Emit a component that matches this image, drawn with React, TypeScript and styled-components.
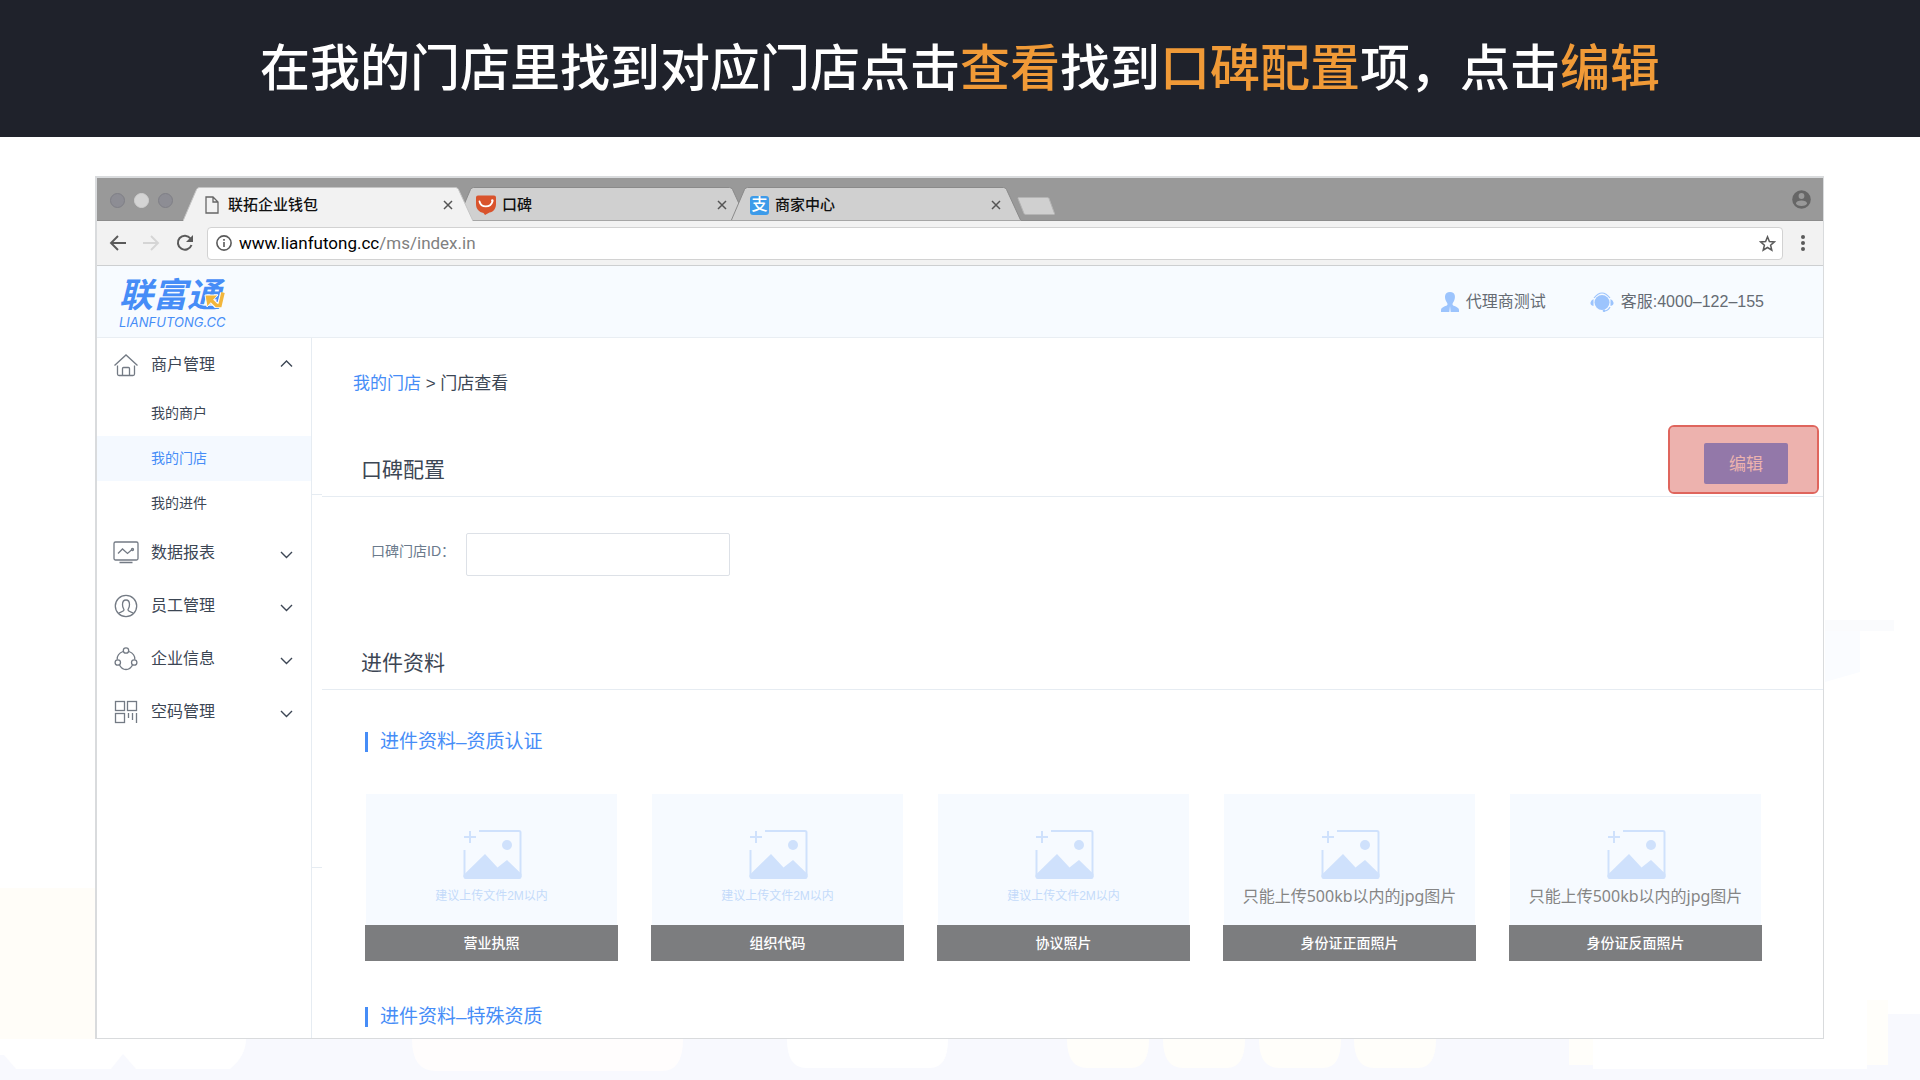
import React from "react";
import styled, { createGlobalStyle, css } from "styled-components";

const Global = createGlobalStyle`
  *, *::before, *::after { box-sizing: border-box; }
  body {
    margin: 0;
    background: #fff;
    color: #3c4654;
    font-family: "Liberation Sans", "Noto Sans CJK SC", sans-serif;
  }
  button, input { font: inherit; }
  a { color: inherit; text-decoration: none; }
  h1, h2, h3, p, ul, figure { margin: 0; padding: 0; font-weight: 400; }
  ul { list-style: none; }
  svg { display: block; flex: none; }
`;

const Page = styled.div`
  position: relative;
  display: flex;
  flex-direction: column;
  min-height: 100vh;
`;

const Scenery = styled.svg`
  position: absolute;
  inset: 0;
  width: 100%;
  height: 100%;
  z-index: -1;
`;

const Banner = styled.header`
  display: flex;
  align-items: center;
  justify-content: center;
  height: 137px;
  padding-bottom: 10px;
  background: #1f222b;
`;

const BannerTitle = styled.h1`
  color: #fff;
  font-family: "Noto Sans CJK SC", sans-serif;
  font-size: 50px;
  line-height: 72px;
  font-weight: 500;
`;

const Accent = styled.span`
  color: #f09a37;
`;

const BrowserWindow = styled.section`
  display: flex;
  flex-direction: column;
  flex: 1;
  margin: 39px 96px 41px 95px;
  border: solid #d9dbdd;
  border-width: 2px 1px 1px 2px;
  background: #fff;
`;

const TabStrip = styled.div`
  display: flex;
  align-items: flex-end;
  height: 43px;
  padding: 0 12px 0 13px;
  background: #999;
  box-shadow: inset 0 -1px #8c8c8c;
`;

const Lights = styled.div`
  display: flex;
  gap: 9px;
  height: 28px;
  margin-right: 10px;
`;

const Light = styled.span<{ $lit?: boolean }>`
  width: 15px;
  height: 15px;
  border-radius: 50%;
  border: 1px solid ${(p) => (p.$lit ? "#cfcfcf" : "#7f7f86")};
  background: ${(p) => (p.$lit ? "#d4d4d4" : "#8d8d94")};
`;

const Tab = styled.div<{ $active?: boolean }>`
  position: relative;
  display: flex;
  align-items: center;
  flex: 0 1 290px;
  height: 34px;
  padding: 2px 20px 0 19px;
  z-index: ${(p) => (p.$active ? 1 : 0)};
  & + & { margin-left: -16px; }
`;

const TabShape = styled.svg`
  position: absolute;
  inset: 0;
  width: 100%;
  height: 100%;
  z-index: -1;
`;

const TabTitle = styled.span`
  flex: 1;
  margin-left: 6px;
  color: #111;
  font-size: 15px;
  line-height: 20px;
  font-weight: 500;
`;

const IconButton = styled.button`
  display: flex;
  align-items: center;
  justify-content: center;
  padding: 0;
  border: 0;
  background: none;
`;

const NewTab = styled.button`
  height: 18px;
  width: 38px;
  margin: 0 auto 6px -4px;
  padding: 0;
  border: 0;
  background: none;
`;

const Profile = styled(IconButton)`
  height: 43px;
`;

const AlipayMark = styled.span`
  width: 19px;
  height: 19px;
  border-radius: 3px;
  background: #3d9be9;
  color: #fff;
  font-size: 16px;
  line-height: 18px;
  font-weight: 500;
  text-align: center;
`;

const Toolbar = styled.div`
  display: flex;
  align-items: center;
  height: 45px;
  padding: 0 12px;
  background: #f2f2f2;
  border-bottom: 1px solid #cdcfd1;
`;

const NavButtons = styled.div`
  display: flex;
  gap: 15px;
  margin-right: 12px;
`;

const Omnibox = styled.label`
  display: flex;
  align-items: center;
  flex: 1;
  height: 33px;
  padding: 0 6px 0 8px;
  border: 1px solid #d2d2d2;
  border-radius: 4px;
  background: #fff;
`;

const Address = styled.span`
  flex: 1;
  margin-left: 7px;
  color: #808080;
  font-family: Roboto, sans-serif;
  font-size: 17px;
  line-height: 24px;
  b { color: #000; font-weight: 400; }
`;

const MenuButton = styled(IconButton)`
  margin-left: 12px;
  width: 16px;
`;

const SiteHeader = styled.div`
  display: flex;
  align-items: center;
  justify-content: space-between;
  height: 72px;
  padding: 0 59px 0 22px;
  background: #f7fbff;
  border-bottom: 1px solid #e9eef3;
`;

const Logo = styled.a`
  position: relative;
  display: flex;
  flex-direction: column;
  color: #468df7;
  font-style: italic;
`;

const LogoName = styled.span`
  font-size: 34px;
  line-height: 40px;
  font-weight: 700;
`;

const LogoDomain = styled.span`
  font-family: Inter, sans-serif;
  font-size: 13px;
  line-height: 14px;
`;

const LogoArrow = styled.svg`
  position: absolute;
  right: 0;
  top: 14px;
`;

const Account = styled.div`
  display: flex;
  gap: 44px;
`;

const AccountItem = styled.span`
  display: flex;
  align-items: center;
  gap: 7px;
  color: #656b73;
  font-size: 16px;
  line-height: 24px;
`;

const Body = styled.div`
  display: flex;
  flex: 1;
`;

const Sidebar = styled.nav`
  flex: 0 0 215px;
  border-right: 1px solid #e6ecf2;
`;

const MenuGroup = styled.button`
  display: flex;
  align-items: center;
  gap: 12px;
  width: 100%;
  height: 53px;
  padding: 0 18px 0 16px;
  border: 0;
  background: none;
  color: #3c4654;
  font-size: 16px;
  line-height: 24px;
  text-align: left;
  span { flex: 1; }
`;

const SubLink = styled.a<{ $active?: boolean }>`
  display: block;
  padding-left: 54px;
  font-size: 14px;
  line-height: 45px;
  ${(p) => p.$active && css`
    color: #468df7;
    background: #f4f9ff;
  `}
`;

const Gutter = styled.div`
  flex: 0 0 10px;
`;

const GutterBlock = styled.div<{ $height: number }>`
  height: ${(p) => p.$height}px;
  border-bottom: 1px solid #e6ecf2;
`;

const Main = styled.main`
  flex: 1;
  min-width: 0;
`;

const Breadcrumb = styled.nav`
  padding: 34px 31px 29px;
  font-size: 17px;
  line-height: 24px;
  a { color: #468df7; }
`;

const SectionHead = styled.div`
  display: flex;
  align-items: flex-end;
  justify-content: space-between;
  min-height: 72px;
  padding: 0 35px 12px 39px;
  border-bottom: 1px solid #e6ecf2;
`;

const SectionTitle = styled.h2`
  font-size: 21px;
  line-height: 28px;
`;

const EditSpot = styled.div`
  position: relative;
`;

const EditButton = styled.button`
  display: block;
  width: 84px;
  height: 41px;
  padding: 0 0 2px;
  border: 0;
  border-radius: 2px;
  background: #4a8bf5;
  color: #fff;
  font-size: 17px;
`;

const Highlight = styled.div`
  position: absolute;
  inset: -18px -31px -10px -36px;
  border: 2px solid #df655d;
  border-radius: 6px;
  background: rgba(219, 101, 93, 0.5);
  background-clip: padding-box;
  pointer-events: none;
`;

const FormRow = styled.div`
  display: flex;
  align-items: flex-start;
  padding: 36px 49px 42px;
`;

const FieldLabel = styled.label`
  width: 95px;
  color: #6a7a8c;
  font-size: 14px;
  line-height: 36px;
`;

const Field = styled.input`
  width: 264px;
  height: 43px;
  padding: 0 12px;
  border: 1px solid #dde1e7;
  border-radius: 2px;
  background: #fff;
`;

const Materials = styled.div`
  padding: 42px 61px 0 43px;
`;

const GroupTitle = styled.h3`
  padding-left: 12px;
  border-left: 3px solid #468df7;
  color: #468df7;
  font-size: 19px;
  line-height: 20px;
`;

const Cards = styled.div`
  display: grid;
  grid-template-columns: repeat(5, 1fr);
  gap: 33px;
  margin: 42px 0 46px;
`;

const Card = styled.figure`
  display: flex;
  flex-direction: column;
`;

const Upload = styled.div`
  display: flex;
  flex-direction: column;
  align-items: center;
  height: 131px;
  margin: 0 1px;
  padding-top: 35px;
  background: #f6faff;
`;

const Hint = styled.p<{ $strict?: boolean }>`
  margin-top: 4px;
  color: ${(p) => (p.$strict ? "#858585" : "#c4dafa")};
  font-family: ${(p) => (p.$strict ? '"Noto Sans", "Noto Sans CJK SC", sans-serif' : "inherit")};
  font-size: ${(p) => (p.$strict ? "16px" : "12px")};
  line-height: 24px;
  white-space: nowrap;
`;

const Caption = styled.figcaption`
  background: #7c7d7f;
  color: #fff;
  font-size: 14px;
  line-height: 36px;
  font-weight: 500;
  text-align: center;
`;

const Close = () => (
  <svg width="10" height="10" viewBox="0 0 10 10" stroke="#555" strokeWidth="1.5">
    <path d="M1 1l8 8M9 1l-8 8" />
  </svg>
);

const FileIcon = () => (
  <svg width="20" height="18" viewBox="0 0 20 18" fill="none" stroke="#666" strokeWidth="1.3">
    <path d="M4 1h7l5 5v11H4zM11 1v5h5" />
  </svg>
);

const KoubeiIcon = () => (
  <svg width="20" height="20" viewBox="0 0 20 20">
    <path d="M2 .5h16q2 0 2 2V9c0 5-3 8-6.500 8.500L9 20l-1.500-2C3 17 0 14 0 9V2.500Q0 .5 2 .5z" fill="#d9532c" />
    <path d="M3.500 6.500c1.500 6.500 11 6.500 13 0" fill="none" stroke="#fff" strokeWidth="1.800" strokeLinecap="round" />
    <circle cx="16.300" cy="5.500" r="1.200" fill="#fff" />
  </svg>
);

type TabProps = { title: string; icon: React.ReactNode; active?: boolean };

const BrowserTab = ({ title, icon, active }: TabProps) => (
  <Tab $active={active}>
    <TabShape viewBox="0 0 290 34" preserveAspectRatio="none">
      <path
        d="M0 34L13.500 2.500Q14.500 .5 16.500 .5H272.500Q274.500 .5 275.500 2.500L290 34"
        fill={active ? "#f2f2f2" : "#d0d0d0"}
        stroke={active ? "#c4c4c4" : "#8a8a8a"}
      />
      {!active && <path d="M0 33.500H290" stroke="#a6a6a6" />}
    </TabShape>
    {icon}
    <TabTitle>{title}</TabTitle>
    <IconButton aria-label="关闭"><Close /></IconButton>
  </Tab>
);

const menuIcons = {
  home: <path d="M1.500 13.500L13 3l11.500 10.500M4.500 13.500V22q0 1.500 1.500 1.500h14q1.500 0 1.500-1.500v-8.500M9.500 23.500v-7q0-1 1-1h5q1 0 1 1v7" />,
  chart: (
    <>
      <rect x="1" y="2" width="24" height="18" rx="1.500" />
      <path d="M6.500 22.500h13M5 13.500L9.500 9l5 4.500 4.500-4" />
      <circle cx="19.500" cy="9.500" r="1" />
    </>
  ),
  staff: (
    <>
      <circle cx="13" cy="13" r="10.700" />
      <path d="M5.500 20.500c1-2 5.500-1.500 5.500-3.500 0-1.500-1.500-2-1.500-5.500 0-6 7-6 7 0 0 3.500-1.500 4-1.500 5.500 0 2 4.500 1.500 5.500 3.500" />
    </>
  ),
  company: (
    <>
      <circle cx="13" cy="4.500" r="2.700" />
      <circle cx="4.800" cy="16.500" r="2.700" />
      <circle cx="21.200" cy="16.500" r="2.700" />
      <path d="M10 5.500c-4 1.500-6 4.500-5.800 8M16 5.500c4 1.500 6 4.500 5.800 8M6.500 19c3 6 10 6 13 0" />
    </>
  ),
  code: (
    <>
      <rect x="2.500" y="2.500" width="9" height="9" />
      <rect x="14.500" y="2.500" width="9" height="9" />
      <rect x="2.500" y="14.500" width="9" height="9" />
      <path d="M15.500 14v5M19.500 14v7M23.500 14v10" />
    </>
  ),
};

type MenuProps = { icon: keyof typeof menuIcons; label: string; open?: boolean };

const MenuItem = ({ icon, label, open }: MenuProps) => (
  <MenuGroup aria-expanded={!!open}>
    <svg width="26" height="26" viewBox="0 0 26 26" fill="none" stroke="#737a84" strokeWidth="1.300">
      {menuIcons[icon]}
    </svg>
    <span>{label}</span>
    <svg width="13" height="12" viewBox="0 0 13 12" fill="none" stroke="#3c4654" strokeWidth="1.400">
      <path d={open ? "M1 7.500l5.500-5.500 5.500 5.500" : "M1 5l5.500 5.500L12 5"} />
    </svg>
  </MenuGroup>
);

const PictureIcon = () => (
  <svg width="60" height="51" viewBox="0 0 60 51" fill="none" stroke="#cfe1fc" strokeWidth="2">
    <path d="M17 2h40q1.500 0 1.500 1.500V48M2.500 21v27M2 8h12M8 2v12" />
    <ellipse cx="45" cy="16" rx="5" ry="5" fill="#cfe1fc" stroke="none" />
    <path d="M1.500 46L23 25l12.500 13.500L45 31l14.500 14v3q0 2-2 2H3.500q-2 0-2-2z" fill="#cfe1fc" stroke="none" />
  </svg>
);

const uploads = [
  { name: "营业执照" },
  { name: "组织代码" },
  { name: "协议照片" },
  { name: "身份证正面照片", strict: true },
  { name: "身份证反面照片", strict: true },
];

export default function App() {
  return (
    <Page>
      <Global />
      <Scenery viewBox="0 0 1920 1080" preserveAspectRatio="none" aria-hidden="true">
        <rect x="0" y="888" width="95" height="152" fill="#fffdf8" />
        <rect x="0" y="1039" width="1920" height="41" fill="#f8f9fe" />
        <path d="M0 1039H246Q246 1056 230 1069H136L123 1054L111 1069H16L4 1055H0z" fill="#fff" />
        <path d="M412 1039H683Q683 1071 662 1071H436Q412 1071 412 1039z" fill="#fffdfd" />
        <path d="M787 1039H948Q948 1068 930 1068H806Q787 1068 787 1039z" fill="#fff" />
        {[1067, 1163, 1259, 1354].map((x) => (
          <path key={x} d={`M${x} 1039h82q0 29-18 29h-44q-20 0-20-29z`} fill="#fffefa" />
        ))}
        <rect x="1569" y="1000" width="319" height="65" fill="#fffefa" />
        <rect x="1593" y="1000" width="274" height="69" fill="#fff" />
        <rect x="1888" y="1014" width="32" height="66" fill="#f8f9fe" />
        <rect x="1825" y="620" width="69" height="11" fill="#fafbfd" />
        <path d="M1825 631h35v41l-35 10z" fill="#fafcff" />
      </Scenery>

      <Banner>
        <BannerTitle>
          在我的门店里找到对应门店点击<Accent>查看</Accent>找到<Accent>口碑配置</Accent>项，点击<Accent>编辑</Accent>
        </BannerTitle>
      </Banner>

      <BrowserWindow>
        <TabStrip>
          <Lights><Light /><Light $lit /><Light /></Lights>
          <BrowserTab active title="联拓企业钱包" icon={<FileIcon />} />
          <BrowserTab title="口碑" icon={<KoubeiIcon />} />
          <BrowserTab title="商家中心" icon={<AlipayMark>支</AlipayMark>} />
          <NewTab aria-label="新标签页">
            <svg width="38" height="18" viewBox="0 0 38 18">
              <path d="M2 .5h28q1.500 0 2 1l5.500 15q.3 1-1 1H9q-1.500 0-2-1L1 1.500q-.3-1 1-1z" fill="#d0d0d0" stroke="#b4b4b4" />
            </svg>
          </NewTab>
          <Profile aria-label="用户">
            <svg width="19" height="19" viewBox="0 0 19 19">
              <circle cx="9.500" cy="9.500" r="9.300" fill="#666" />
              <circle cx="9.500" cy="6" r="2.900" fill="#999" />
              <ellipse cx="9.500" cy="13.200" rx="5.500" ry="2.800" fill="#999" />
            </svg>
          </Profile>
        </TabStrip>

        <Toolbar>
          <NavButtons>
            <IconButton aria-label="后退">
              <svg width="18" height="18" viewBox="0 0 18 18" fill="none" stroke="#5a5a5a" strokeWidth="1.900"><path d="M17 9H2.500M9 2L2 9l7 7" /></svg>
            </IconButton>
            <IconButton aria-label="前进">
              <svg width="18" height="18" viewBox="0 0 18 18" fill="none" stroke="#d5d5d5" strokeWidth="1.900"><path d="M1 9h14.500M9 2l7 7-7 7" /></svg>
            </IconButton>
            <IconButton aria-label="刷新">
              <svg width="20" height="18" viewBox="0 0 20 18" fill="none" stroke="#5a5a5a" strokeWidth="2">
                <path d="M15.500 4.500A7 7 0 1 0 16.500 11" />
                <path d="M18 1v7h-7z" fill="#5a5a5a" stroke="none" />
              </svg>
            </IconButton>
          </NavButtons>
          <Omnibox as="div">
            <svg width="16" height="16" viewBox="0 0 16 16" fill="none" stroke="#5a5a5a" strokeWidth="1.600">
              <circle cx="8" cy="8" r="7.100" /><path d="M8 7v5M8 4v1.700" />
            </svg>
            <Address><b>www.lianfutong.cc</b>/ms/index.in</Address>
            <IconButton aria-label="收藏">
              <svg width="17" height="17" viewBox="0 0 17 17" fill="none" stroke="#5a5a5a" strokeWidth="1.500">
                <path d="M8.500 1.800l1.900 4.700 5 .4-3.800 3.300 1.200 4.900-4.300-2.600-4.300 2.600 1.200-4.900L1.600 6.900l5-.4z" />
              </svg>
            </IconButton>
          </Omnibox>
          <MenuButton aria-label="菜单">
            <svg width="4" height="16" viewBox="0 0 4 16" fill="#5a5a5a"><circle cx="2" cy="2" r="2" /><circle cx="2" cy="8" r="2" /><circle cx="2" cy="14" r="2" /></svg>
          </MenuButton>
        </Toolbar>

        <SiteHeader>
          <Logo href="#">
            <LogoName>联富通</LogoName>
            <LogoDomain>LIANFUTONG.CC</LogoDomain>
            <LogoArrow width="22" height="20" viewBox="0 0 22 20" fill="none">
              <path d="M4 8l8 8h4l3-12" stroke="#f7fbff" strokeWidth="6" />
              <path d="M1 6h13L3 18z" fill="#f2b63c" stroke="#f7fbff" />
              <path d="M6 10l6.500 6.500H16L19 3.500" stroke="#f2b63c" strokeWidth="3.500" />
            </LogoArrow>
          </Logo>
          <Account>
            <AccountItem>
              <svg width="18" height="20" viewBox="0 0 18 20" fill="#9cc4fd">
                <path d="M9 0c6 0 5.500 6 4 9-.8 1.500-1.500 2-1.500 3.500 0 1.800 6.500 2 6.500 5.500v2H9.700L9 14l-.7 6H0v-2c0-3.500 6.500-3.700 6.500-5.500C6.500 11 5.800 10.500 5 9 3.500 6 3 0 9 0z" />
              </svg>
              代理商测试
            </AccountItem>
            <AccountItem>
              <svg width="24" height="20" viewBox="0 0 24 20" fill="#9cc4fd">
                <circle cx="12" cy="10.500" r="7.500" />
                <path d="M4 6Q12-4 20 6M20 15q-2 4-6 4" fill="none" stroke="#9cc4fd" strokeWidth="1.200" />
                <path d="M3.500 7v7Q0 13 .5 10.500 1 8 3.500 7zM20.500 7v7q3.500-1 3-3.500Q23 8 20.500 7z" />
                <circle cx="14" cy="18.700" r="1.300" />
              </svg>
              客服:4000–122–155
            </AccountItem>
          </Account>
        </SiteHeader>

        <Body>
          <Sidebar>
            <MenuItem open icon="home" label="商户管理" />
            <ul>
              <li><SubLink href="#">我的商户</SubLink></li>
              <li><SubLink href="#" $active>我的门店</SubLink></li>
              <li><SubLink href="#">我的进件</SubLink></li>
            </ul>
            <MenuItem icon="chart" label="数据报表" />
            <MenuItem icon="staff" label="员工管理" />
            <MenuItem icon="company" label="企业信息" />
            <MenuItem icon="code" label="空码管理" />
          </Sidebar>
          <Gutter>
            <GutterBlock $height={157} />
            <GutterBlock $height={373} />
          </Gutter>
          <Main>
            <Breadcrumb><a href="#">我的门店</a> &gt; 门店查看</Breadcrumb>

            <SectionHead>
              <SectionTitle>口碑配置</SectionTitle>
              <EditSpot>
                <EditButton>编辑</EditButton>
                <Highlight />
              </EditSpot>
            </SectionHead>
            <FormRow>
              <FieldLabel htmlFor="shop-id">口碑门店ID：</FieldLabel>
              <Field id="shop-id" />
            </FormRow>

            <SectionHead>
              <SectionTitle>进件资料</SectionTitle>
            </SectionHead>
            <Materials>
              <GroupTitle>进件资料–资质认证</GroupTitle>
              <Cards>
                {uploads.map((u) => (
                  <Card key={u.name}>
                    <Upload>
                      <PictureIcon />
                      <Hint $strict={u.strict}>{u.strict ? "只能上传500kb以内的jpg图片" : "建议上传文件2M以内"}</Hint>
                    </Upload>
                    <Caption>{u.name}</Caption>
                  </Card>
                ))}
              </Cards>
              <GroupTitle>进件资料–特殊资质</GroupTitle>
            </Materials>
          </Main>
        </Body>
      </BrowserWindow>
    </Page>
  );
}
